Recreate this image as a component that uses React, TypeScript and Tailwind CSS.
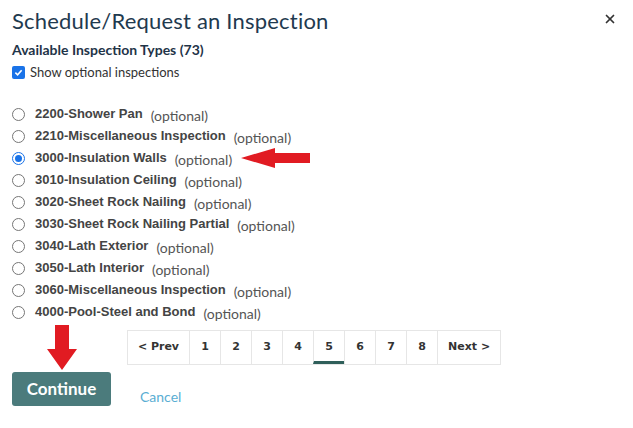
import { X } from 'lucide-react';

const items = [
  '2200-Shower Pan',
  '2210-Miscellaneous Inspection',
  '3000-Insulation Walls',
  '3010-Insulation Ceiling',
  '3020-Sheet Rock Nailing',
  '3030-Sheet Rock Nailing Partial',
  '3040-Lath Exterior',
  '3050-Lath Interior',
  '3060-Miscellaneous Inspection',
  '4000-Pool-Steel and Bond',
];

const pages = ['< Prev', '1', '2', '3', '4', '5', '6', '7', '8', 'Next >'];

export default function App() {
  return (
    <div className="relative w-[633px] h-[428px] bg-white px-3 font-['Lato',sans-serif]">
      {/* Header */}
      <div className="flex items-start justify-between pt-[7px]">
        <h1 className="text-[22px] leading-[28px] text-[#1f3a4f] tracking-[0.2px]">
          Schedule/Request an Inspection
        </h1>
        <button className="mt-[5px] mr-[4px] text-[#333]">
          <X size={14} strokeWidth={3} />
        </button>
      </div>

      <div className="mt-[7px] text-[14px] font-bold text-[#1f3448] leading-[16px]">
        Available Inspection Types (73)
      </div>

      <label className="mt-[6px] flex items-center gap-[5px] text-[13px] text-[#333] leading-[16px]">
        <span className="w-[13px] h-[13px] rounded-[2px] bg-[#1a73e8] flex items-center justify-center">
          <svg width="9" height="9" viewBox="0 0 10 10">
            <path d="M1.5 5.2 L4 7.5 L8.5 2.5" fill="none" stroke="white" strokeWidth="1.8" />
          </svg>
        </span>
        Show optional inspections
      </label>

      {/* Inspection list */}
      <div className="mt-[23px] flex flex-col">
        {items.map((name, i) => (
          <div key={name} className="h-[22px] flex items-center">
            {i === 2 ? (
              <span className="w-[13px] h-[13px] rounded-full border border-[#1a73e8] flex items-center justify-center">
                <span className="w-[7px] h-[7px] rounded-full bg-[#1a73e8]" />
              </span>
            ) : (
              <span className="w-[13px] h-[13px] rounded-full border border-[#767676] bg-white" />
            )}
            <span className="ml-[10px] font-['Liberation_Sans',Arial,sans-serif] font-bold text-[13px] text-[#444]">
              {name}
            </span>
            <span className="ml-[8px] text-[14px] text-[#555] translate-y-[1px]">(optional)</span>
            {i === 2 && (
              <svg className="ml-[8px]" width="72" height="22" viewBox="0 0 72 22">
                <polygon points="1,11 35,1 35,6 70,6 70,16 35,16 35,21" fill="#e11b22" />
              </svg>
            )}
          </div>
        ))}
      </div>

      {/* Pagination */}
      <div className="mt-[7px] flex justify-center pr-[5px]">
        <div className="flex border border-[#e6e6e6] font-['DejaVu_Sans',Verdana,sans-serif] font-bold text-[11px] text-[#333]">
          {pages.map((p, i) => (
            <div
              key={p}
              className={`h-[33px] flex items-center justify-center border-l border-[#e6e6e6] first:border-l-0 ${
                p.length > 1 ? 'px-[10px] min-w-[61px]' : 'w-[31px]'
              } ${i === 5 ? 'border-b-[3px] border-b-[#2f5f5a] pt-[3px]' : ''}`}
            >
              {p}
            </div>
          ))}
        </div>
      </div>

      {/* Actions */}
      <div className="mt-[5px] flex items-center">
        <button className="w-[99px] h-[34px] rounded-[3px] bg-[#4b7b7c] text-white font-bold text-[17px]">
          Continue
        </button>
        <button className="ml-[29px] mt-[16px] text-[14px] text-[#5aaed3]">Cancel</button>
      </div>

      {/* Down arrow */}
      <svg className="absolute left-[47px] top-[325px]" width="30" height="46" viewBox="0 0 30 46">
        <polygon points="8,0 22,0 22,24 30,24 15,45 0,24 8,24" fill="#e11b22" />
      </svg>
    </div>
  );
}
